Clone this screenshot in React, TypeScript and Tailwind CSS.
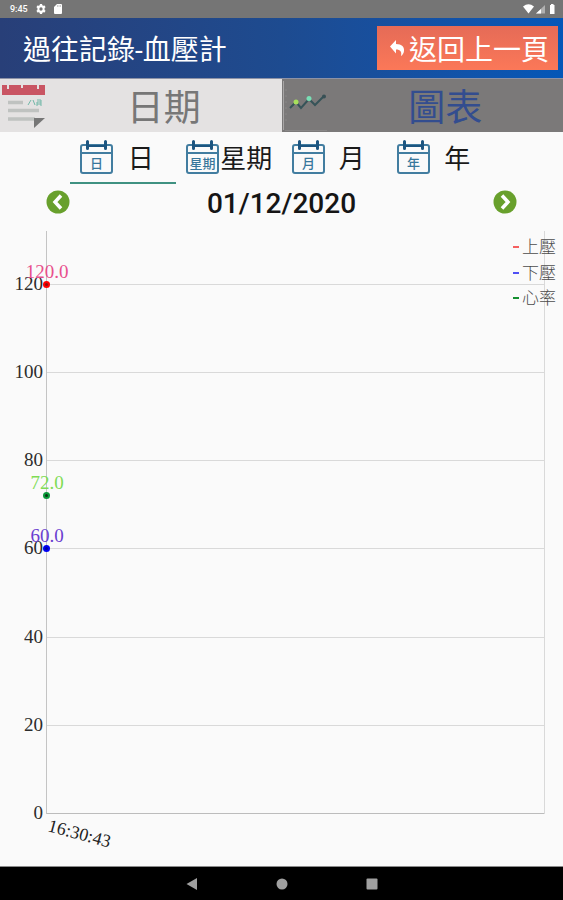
import React from "react";

const SANS = "font-['Roboto','Noto_Sans_CJK_TC',sans-serif]";
const SERIF = "font-['Liberation_Serif','Noto_Sans_CJK_TC',serif]";

const X0 = 47;
const X1 = 545;
const Y0 = 593;
const toY = (value: number) => Y0 - Math.round(value * 4.41);

const ticks = [0, 20, 40, 60, 80, 100, 120];

const series = [
  { name: "上壓", value: 120, dot: "#ff0000", core: "#8a1010", legend: "#f56060", label: "#e8508c", y: 27 },
  { name: "下壓", value: 60, dot: "#0000f0", core: "#0000a0", legend: "#5050f5", label: "#6a3fd0", y: 53 },
  { name: "心率", value: 72, dot: "#0a9a3a", core: "#063a14", legend: "#159030", label: "#7fdc55", y: 78 },
];

const periods = [
  { label: "日", active: true },
  { label: "星期", active: false },
  { label: "月", active: false },
  { label: "年", active: false },
];

function StatusBar() {
  return (
    <div className="flex h-[18px] items-center justify-between bg-[#757575] pl-2.5 pr-2 text-white">
      <div className="flex items-center gap-2">
        <span className="text-[9px] font-medium leading-none">9:45</span>
        <svg className="h-2.5 w-2.5" viewBox="0 0 24 24" fill="currentColor" aria-hidden="true">
          <path
            fillRule="evenodd"
            d="M9.5 0h5l.7 3.2 2.2 1.2 3.2-1 2.4 4.200-2.400 2.200v4.400l2.400 2.200-2.400 4.200-3.200-1-2.200 1.200-.7 3.200h-5l-.7-3.200-2.200-1.200-3.200 1L1 16.400l2.400-2.200V9.800L1 7.600l2.400-4.200 3.200 1 2.200-1.200zM12 8a4 4 0 1 0 0 8 4 4 0 0 0 0-8z"
          />
        </svg>
        <svg className="h-2.5 w-2" viewBox="0 0 8 10" fill="currentColor" aria-hidden="true">
          <path d="M3 0h4q1 0 1 1v8q0 1-1 1H1q-1 0-1-1V3z" />
          <path d="M3.500 1.200v1.600M5 1.200v1.600M6.500 1.200v1.600" stroke="#999" strokeWidth="0.600" />
        </svg>
      </div>
      <svg className="h-2.5 w-8" viewBox="0 0 32 10" aria-hidden="true">
        <path d="M0 2.500Q5.500-2 11 2.500L5.500 9.500z" fill="#fff" />
        <path d="M22 1v8.500h-9z" fill="#b0b0b0" />
        <path d="M18 5v4.500h-5z" fill="#fff" />
        <path d="M27 1h1V0h2.500v1h1v9H27z" fill="#fff" />
      </svg>
    </div>
  );
}

function Header() {
  return (
    <header className="flex h-[61px] items-center justify-between border-b border-[#8d92a6] bg-linear-to-r from-[#283f78] via-[#1d4b90] to-[#0457b8] pl-[23px] pr-[5px]">
      <h1 className="pt-1.5 text-[28px] leading-9 text-white">過往記錄-血壓計</h1>
      <button
        type="button"
        className="flex h-11 items-center gap-1 bg-linear-to-b from-[#e56b57] to-[#fb7858] pl-3 pr-[9px] text-[28px] leading-9 text-white"
      >
        <svg className="h-4 w-4" viewBox="0 0 16 16" fill="currentColor" aria-hidden="true">
          <path d="M7 0v4c6 0 8.500 3 8 7-.3 2.500-1.500 4-3 5 1-4-.5-6.500-5-6.500v4L1 6.500z" />
        </svg>
        <span className="pt-1.5">返回上一頁</span>
      </button>
    </header>
  );
}

function NoteIcon() {
  return (
    <svg className="h-[53px] w-[46px] shrink-0" viewBox="0 0 46 53" aria-hidden="true">
      <path d="M2 6h5v4h2V6h12v3h2V6h14v4h2V6h6v10H2z" fill="#c95563" />
      <path d="M8 23.500h15M8 31.500h31M8 40h27" stroke="#bfc2c0" strokeWidth="3.500" />
      <path d="m31 21-3 5m5-5 2 5m2-3v4m0-6h4v6m-4-4h4m-4 2h4" stroke="#72b8a8" fill="none" />
      <path d="M34 39h11L34 49z" fill="#767676" />
    </svg>
  );
}

function TrendIcon() {
  return (
    <svg className="h-[53px] w-[46px] shrink-0" viewBox="0 0 46 53" aria-hidden="true">
      <path d="M1.500 2v49" stroke="#a8a6a6" />
      <path d="M3 51.500h42M3 11h2m-2 6h2m-2 6h2m-2 6h2m-2 6h2m-2 6h2" stroke="#898787" />
      <path d="m8 29 6-6 5 6 8-9 6 6 9-9" stroke="#365358" strokeWidth="2" fill="none" />
      <circle cx="14" cy="23" r="2.500" fill="#a7e05c" />
      <circle cx="27" cy="19.500" r="2.500" fill="#79dfb5" />
      <circle cx="42" cy="17.500" r="2" fill="#385055" />
    </svg>
  );
}

function MainTabs() {
  return (
    <nav className="grid h-[53px] grid-cols-2 text-[37px] leading-[47px]">
      <button type="button" className="flex bg-[#e4e2e2] text-[#777777]">
        <NoteIcon />
        <span className="flex-1 pt-1.5">日期</span>
      </button>
      <button type="button" className="flex bg-[#7b7979] text-[#334d8f]">
        <TrendIcon />
        <span className="flex-1 pt-1.5">圖表</span>
      </button>
    </nav>
  );
}

function CalendarIcon({ label }: { label: string }) {
  return (
    <svg className="h-[34px] w-[33px] shrink-0" viewBox="0 0 33 34" aria-hidden="true">
      <rect x="1" y="5" width="31" height="28" rx="2" fill="none" stroke="#427da0" strokeWidth="2" />
      <path d="M1 13h31" stroke="#427da0" strokeWidth="2" />
      <path d="M8 6h17" stroke="#1c5580" strokeWidth="2" />
      <path d="M7.500 1.500v7M25.500 1.500v7" stroke="#1c5580" strokeWidth="3" strokeLinecap="round" />
      <text x="16.500" y="28" textAnchor="middle" fill="#38779c" className="text-[13px] font-medium">
        {label}
      </text>
    </svg>
  );
}

function PeriodTabs() {
  return (
    <div className="mx-auto grid w-3/4 grid-cols-4">
      {periods.map((p) => (
        <button
          key={p.label}
          type="button"
          aria-pressed={p.active}
          className={
            p.active
              ? "flex h-[52px] items-center border-b-2 border-[#3f9181] pl-2.5 pr-2"
              : "flex h-[52px] items-center border-b-2 border-transparent pl-2.5 pr-2"
          }
        >
          <CalendarIcon label={p.label} />
          <span className="flex flex-1 justify-center whitespace-nowrap pt-1 text-[26px] leading-8">{p.label}</span>
        </button>
      ))}
    </div>
  );
}

function ArrowButton({ name, d }: { name: string; d: string }) {
  return (
    <button type="button" aria-label={name} className="h-6 w-6">
      <svg viewBox="0 0 24 24" className="h-6 w-6" aria-hidden="true">
        <circle cx="12" cy="12" r="11.500" fill="#68a02c" />
        <path d={d} fill="none" stroke="#fff" strokeWidth="3.500" />
      </svg>
    </button>
  );
}

function DateRow() {
  return (
    <div className="flex h-9 items-center justify-between px-[46px]">
      <ArrowButton name="前一日" d="m15 5.500-6 6.500 6 6.500" />
      <time className="pt-1 text-[28px] font-medium leading-8 text-[#151515]">01/12/2020</time>
      <ArrowButton name="後一日" d="m9 5.500 6 6.500-6 6.500" />
    </div>
  );
}

function Chart() {
  return (
    <svg viewBox="0 0 563 646" className={`block w-full text-[19px] ${SERIF}`} role="img" aria-label="血壓計">
      {ticks.map((t) => (
        <g key={t}>
          <rect x={X0} y={toY(t)} width={X1 - X0} height="1" fill={t === 0 ? "#bcbcbc" : "#d9d9d9"} />
          <text x="43" y={toY(t) + 6} textAnchor="end" fill="#2c2c2c">
            {t}
          </text>
        </g>
      ))}
      <rect x="46" y="11" width="1" height="583" fill="#c4c4c4" />
      <rect x="544" y="11" width="1" height="583" fill="#d9d9d9" />
      {series.map((s) => (
        <g key={s.name}>
          <circle cx="46.500" cy={toY(s.value) + 0.5} r="3.500" fill={s.dot} />
          <circle cx="46.500" cy={toY(s.value) + 0.5} r="1.500" fill={s.core} />
          <text x="47" y={toY(s.value) - 6} textAnchor="middle" fill={s.label}>
            {s.value.toFixed(1)}
          </text>
          <rect x="513" y={s.y - 1} width="6" height="2" fill={s.legend} />
          <text x="522" y={s.y + 6} fill="#4c4c4c" className="text-[17px] font-light">
            {s.name}
          </text>
        </g>
      ))}
      <text x="47" y="611" transform="rotate(15 47 611)" fill="#222222" className="text-[18px]">
        16:30:43
      </text>
    </svg>
  );
}

function SystemNav() {
  return (
    <nav className="flex h-[34px] items-center justify-center gap-[74px] border-t border-[#8a8a8a] bg-black text-[#a0a0a0]">
      <button type="button" aria-label="Back">
        <svg className="h-4 w-4" viewBox="0 0 16 16" fill="currentColor">
          <path d="M13 2v12L2.500 8z" />
        </svg>
      </button>
      <button type="button" aria-label="Home">
        <svg className="h-4 w-4" viewBox="0 0 16 16" fill="currentColor">
          <circle cx="8" cy="8" r="5.500" />
        </svg>
      </button>
      <button type="button" aria-label="Recent apps">
        <svg className="h-4 w-4" viewBox="0 0 16 16" fill="currentColor">
          <rect x="2.500" y="2.500" width="11" height="11" rx="1" />
        </svg>
      </button>
    </nav>
  );
}

export default function App() {
  return (
    <div className={`flex min-h-screen flex-col bg-[#fafafa] text-[#1a1a1a] ${SANS}`}>
      <StatusBar />
      <Header />
      <MainTabs />
      <main className="flex-1">
        <PeriodTabs />
        <DateRow />
        <Chart />
      </main>
      <SystemNav />
    </div>
  );
}
